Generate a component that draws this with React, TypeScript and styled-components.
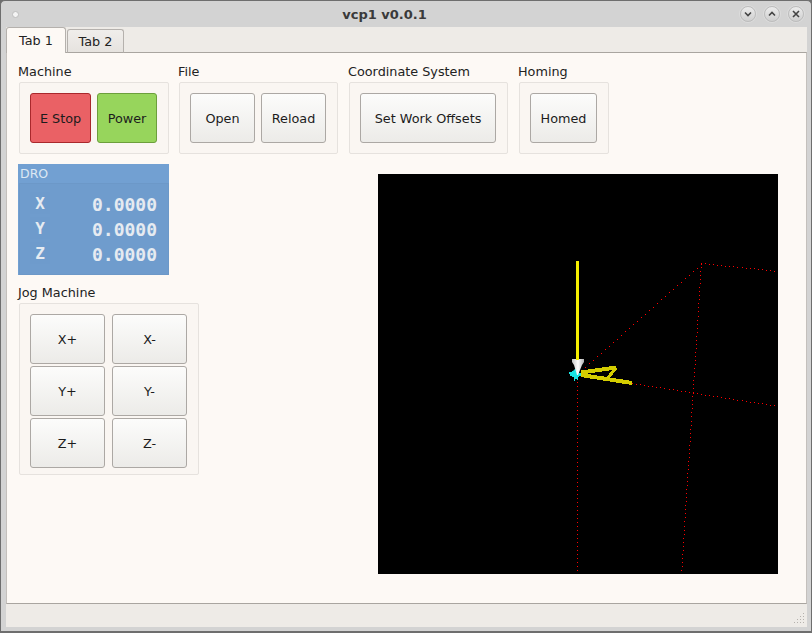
import React from "react";
import styled, { createGlobalStyle } from "styled-components";

const Global = createGlobalStyle`
  html, body { margin: 0; padding: 0; background: #6e6e6e; }
  * { box-sizing: border-box; }
  body { font-family: "DejaVu Sans", sans-serif; font-size: 12.8px; color: #1c1c1c; }
`;

const Window = styled.div`
  width: 812px;
  height: 633px;
  display: flex;
  flex-direction: column;
  background: #d3d3d3;
  border: 1px solid #6e6e6e;
  border-bottom-width: 2px;
  border-radius: 5px 5px 0 0;
  overflow: hidden;
`;

const TitleBar = styled.div`
  height: 26px;
  flex: none;
  display: flex;
  align-items: center;
  padding: 0 7px 0 11px;
`;

const MenuDot = styled.span`
  width: 7px;
  height: 7px;
  border-radius: 50%;
  background: #f4f4f4;
  border: 1px solid #bdbdbd;
`;

const Title = styled.div`
  flex: 1;
  text-align: center;
  font-weight: bold;
  font-size: 13px;
  color: #3a3a3a;
  padding-left: 10px;
`;

const WinButtons = styled.div`
  display: flex;
  gap: 8px;
`;

const WinButton = styled.span`
  width: 16px;
  height: 16px;
  border-radius: 50%;
  border: 1px solid #bcbcbc;
  background: linear-gradient(#ececec, #cfcfcf);
  box-shadow: 0 0 0 1px #dcdcdc;
  display: flex;
  align-items: center;
  justify-content: center;
`;

const Body = styled.div`
  flex: 1;
  min-height: 0;
  display: flex;
  flex-direction: column;
  margin: 0 4px 4px 5px;
  background: #eeebe7;
`;

const TabBar = styled.div`
  height: 26px;
  flex: none;
  display: flex;
  align-items: flex-end;
  position: relative;
  z-index: 1;
  margin-bottom: -1px;
`;

const Tab = styled.div<{ $active?: boolean }>`
  height: ${(p) => (p.$active ? 26 : 24)}px;
  width: ${(p) => (p.$active ? 60 : 57)}px;
  margin-right: ${(p) => (p.$active ? 1 : 0)}px;
  display: flex;
  align-items: center;
  justify-content: center;
  border: 1px solid #b5b1ad;
  border-bottom: ${(p) => (p.$active ? "none" : "1px solid #a9a5a0")};
  border-radius: 3px 3px 0 0;
  background: ${(p) => (p.$active ? "#fdf9f5" : "linear-gradient(#f0eeeb, #e6e3df)")};
  color: #222;
`;

const Panel = styled.div`
  flex: 1;
  min-height: 0;
  background: #fdf9f5;
  border-top: 1px solid #a9a5a0;
  border-bottom: 1px solid #a9a5a0;
  border-right: 1px solid #c4c0bc;
  border-left: 1px solid #c4c0bc;
  padding: 9px 0 0 12px;
  display: flex;
  flex-direction: column;
`;

const TopRow = styled.div`
  display: flex;
  gap: 10px;
`;

const Section = styled.section<{ $w: number }>`
  width: ${(p) => p.$w}px;
  display: flex;
  flex-direction: column;
`;

const Label = styled.div`
  height: 20px;
  line-height: 20px;
  margin-left: -1px;
  color: #222;
`;

const Group = styled.div<{ $w: number }>`
  width: ${(p) => p.$w}px;
  padding: 10px;
  background: #faf6f2;
  border: 1px solid #e6e2de;
  border-radius: 2px;
  display: flex;
  gap: 6px;
`;

const Button = styled.button<{ $w: number; $kind?: "stop" | "power" }>`
  width: ${(p) => p.$w}px;
  height: 50px;
  flex: none;
  font: inherit;
  color: #1c1c1c;
  padding: 0;
  border-radius: 3px;
  border: 1px solid
    ${(p) => (p.$kind === "stop" ? "#a9282c" : p.$kind === "power" ? "#6c9f3c" : "#aca8a4")};
  background: ${(p) =>
    p.$kind === "stop"
      ? "#ea6165"
      : p.$kind === "power"
        ? "#97d55c"
        : "linear-gradient(#fcfcfb, #ecebe8)"};
`;

const Lower = styled.div`
  flex: 1;
  min-height: 0;
  margin-top: 10px;
  display: flex;
  justify-content: space-between;
  padding-right: 28px;
`;

const LeftColumn = styled.div`
  display: flex;
  flex-direction: column;
`;

const Dro = styled.div`
  width: 151px;
  height: 111px;
  margin-left: -1px;
  background: #72a0d2;
  color: #e6ebf1;
  display: flex;
  flex-direction: column;
`;

const DroTitle = styled.div`
  height: 19px;
  line-height: 20px;
  padding-left: 2px;
  font-size: 12.5px;
  color: #dde8f3;
`;

const DroFrame = styled.div`
  flex: 1;
  margin-left: 1px;
  background: #6f9ccd;
  border: 1px solid #6c98c8;
  padding: 7px 11px 0 10px;
  display: flex;
  flex-direction: column;
  gap: 1px;
`;

const DroRow = styled.div`
  height: 24px;
  display: flex;
  align-items: center;
  justify-content: space-between;
  font-family: "DejaVu Sans Mono", monospace;
  font-weight: bold;
`;

const Axis = styled.span`
  width: 20px;
  height: 22px;
  display: flex;
  align-items: center;
  justify-content: center;
  background: #6e9bcc;
  font-size: 16px;
`;

const Value = styled.span`
  font-size: 18px;
  margin-top: 2px;
`;

const JogLabel = styled(Label)`
  margin-top: 8px;
`;

const JogGrid = styled.div`
  width: 180px;
  padding: 10px 10px 6px;
  background: #faf6f2;
  border: 1px solid #e6e2de;
  border-radius: 2px;
  display: grid;
  grid-template-columns: 75px 75px;
  column-gap: 7px;
  row-gap: 2px;
`;

const JogButton = styled(Button).attrs({ $w: 75 })``;

const Canvas = styled.svg`
  width: 400px;
  height: 400px;
  margin-top: 10px;
  background: #000;
  display: block;
`;

const StatusBar = styled.div`
  height: 23px;
  flex: none;
  display: flex;
  align-items: flex-end;
  justify-content: flex-end;
`;

const Grip = styled.svg`
  width: 12px;
  height: 12px;
  display: block;
  margin: 0 1px 2px 0;
`;

type P = [number, number];

function stipple(a: P, b: P, step = 4): P[] {
  const dx = b[0] - a[0];
  const dy = b[1] - a[1];
  const n = Math.floor(Math.max(Math.abs(dx), Math.abs(dy)) / step);
  const out: P[] = [];
  for (let i = 0; i <= n; i++) {
    out.push([Math.round(a[0] + (dx * i) / n), Math.round(a[1] + (dy * i) / n)]);
  }
  return out;
}

// Coordinates are relative to the canvas (reference minus 378,174).
const redLines: [P, P][] = [
  [[199, 200], [323, 90]],
  [[323, 89], [400, 97]],
  [[323, 89], [303, 400]],
  [[254, 209], [400, 232]],
  [[199, 200], [199, 400]],
];

const cyan = "M197 195h2v3h2v1h5v3h-5v1h-1v3h-1v-1h-2v2h-1v-4h-2v-1h-2v-2h-1v-2h3v-1h1z";

const Toolpath: React.FC = () => (
  <Canvas viewBox="0 0 400 400">
    <defs>
      <linearGradient id="cone" x1="0" x2="1" y1="0" y2="0">
        <stop offset="0" stopColor="#c4c4c4" />
        <stop offset="0.5" stopColor="#ffffff" />
        <stop offset="1" stopColor="#b0b0b0" />
      </linearGradient>
    </defs>
    {redLines.map((l, i) =>
      stipple(l[0], l[1]).map((p, j) => (
        <rect key={`${i}-${j}`} x={p[0]} y={p[1]} width={1} height={1} fill="#f00" />
      )),
    )}
    <path d={cyan} fill="#19e6e6" />
    <g fill="none" stroke="#d4cd00" strokeWidth={4} shapeRendering="crispEdges">
      <path d="M203 198.500L238 193.500" />
      <path d="M238 194L228 206" strokeWidth={3} />
      <path d="M203 201L254 209" />
    </g>
    <path d="M194 185H206V188L204 191L200 201H199L196 191L194 188Z" fill="url(#cone)" />
    <rect x={198} y={87} width={3} height={99} fill="#f5ee00" />
  </Canvas>
);

const Chevron: React.FC<{ d: string }> = ({ d }) => (
  <svg width="10" height="10" viewBox="0 0 10 10" fill="none" stroke="#444" strokeWidth={1.6}>
    <path d={d} />
  </svg>
);

const gripDots: P[] = [
  [9, 0],
  [6, 3],
  [9, 3],
  [3, 6],
  [6, 6],
  [9, 6],
  [0, 9],
  [3, 9],
  [6, 9],
  [9, 9],
];

export default function App() {
  return (
    <>
      <Global />
      <Window>
        <TitleBar>
          <MenuDot />
          <Title>vcp1 v0.0.1</Title>
          <WinButtons>
            <WinButton>
              <Chevron d="M2 3.500L5 6.500L8 3.500" />
            </WinButton>
            <WinButton>
              <Chevron d="M2 6.500L5 3.500L8 6.500" />
            </WinButton>
            <WinButton>
              <Chevron d="M2 2L8 8M8 2L2 8" />
            </WinButton>
          </WinButtons>
        </TitleBar>
        <Body>
          <TabBar>
            <Tab $active>Tab 1</Tab>
            <Tab>Tab 2</Tab>
          </TabBar>
          <Panel>
            <TopRow>
              <Section $w={150}>
                <Label>Machine</Label>
                <Group $w={150}>
                  <Button $w={61} $kind="stop">E Stop</Button>
                  <Button $w={60} $kind="power">Power</Button>
                </Group>
              </Section>
              <Section $w={160}>
                <Label>File</Label>
                <Group $w={159}>
                  <Button $w={65}>Open</Button>
                  <Button $w={65}>Reload</Button>
                </Group>
              </Section>
              <Section $w={160}>
                <Label>Coordinate System</Label>
                <Group $w={159}>
                  <Button $w={136}>Set Work Offsets</Button>
                </Group>
              </Section>
              <Section $w={90}>
                <Label>Homing</Label>
                <Group $w={90}>
                  <Button $w={67}>Homed</Button>
                </Group>
              </Section>
            </TopRow>
            <Lower>
              <LeftColumn>
                <Dro>
                  <DroTitle>DRO</DroTitle>
                  <DroFrame>
                    {["X", "Y", "Z"].map((a) => (
                      <DroRow key={a}>
                        <Axis>{a}</Axis>
                        <Value>0.0000</Value>
                      </DroRow>
                    ))}
                  </DroFrame>
                </Dro>
                <JogLabel>Jog Machine</JogLabel>
                <JogGrid>
                  {["X+", "X-", "Y+", "Y-", "Z+", "Z-"].map((t) => (
                    <JogButton key={t}>{t}</JogButton>
                  ))}
                </JogGrid>
              </LeftColumn>
              <Toolpath />
            </Lower>
          </Panel>
          <StatusBar>
            <Grip viewBox="0 0 12 12">
              {gripDots.map(([x, y]) => (
                <rect key={`${x}-${y}`} x={x} y={y} width={1} height={1} fill="#b5b1ad" />
              ))}
            </Grip>
          </StatusBar>
        </Body>
      </Window>
    </>
  );
}
